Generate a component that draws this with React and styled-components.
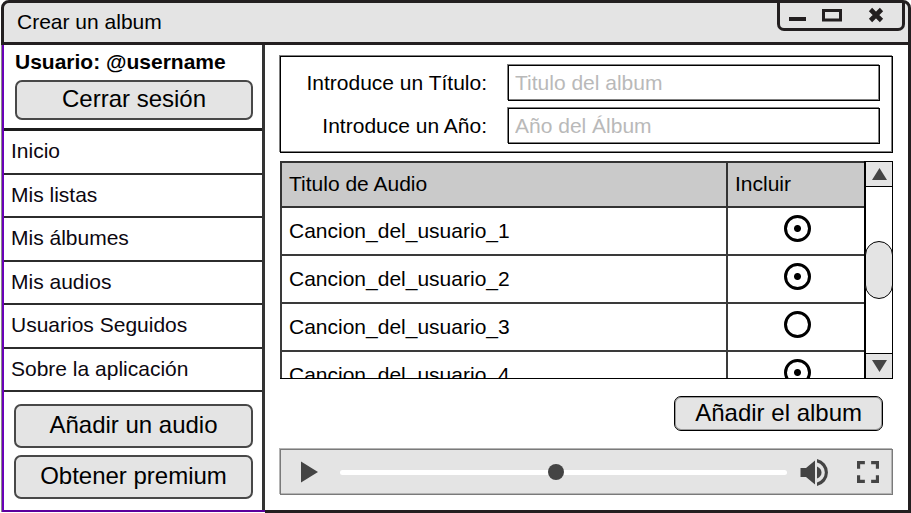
import React, { useState } from "react";
import styled, { createGlobalStyle, css } from "styled-components";

const INK = "#231f20";
const PANEL = "#e4e4e4";
const ICON = "#444444";

const GlobalStyle = createGlobalStyle`
  *, *::before, *::after { box-sizing: border-box; }
  body {
    margin: 0;
    background: #fff;
    color: #000;
    font-family: "Liberation Sans", Arial, sans-serif;
    font-size: 21px;
    line-height: 24px;
  }
  button, input { font: inherit; color: inherit; margin: 0; }
`;

const hairline = (line = "#000", soft = "#808080") => css`
  border: 1px solid ${line};
  box-shadow: -1px -1px 0 ${soft}, inset -1px -1px 0 ${soft};
`;

const Window = styled.div`
  display: flex;
  flex-direction: column;
  min-height: 100vh;
  padding-left: 1px;
`;

const TitleBar = styled.header`
  display: flex;
  justify-content: space-between;
  align-items: flex-start;
  border: 3px solid ${INK};
  border-radius: 8px 8px 0 0;
  background: ${PANEL};
  padding: 0 3px 0 13px;
`;

const Title = styled.h1`
  margin: 0;
  padding: 7px 0 8px;
  font-size: 21px;
  font-weight: 400;
`;

const WindowControls = styled.div`
  display: flex;
  align-items: center;
  gap: 16px;
  height: 28px;
  padding: 0 18px 1px 9px;
  border: 3px solid ${INK};
  border-top: 0;
  border-radius: 0 0 7px 7px;
`;

const IconButton = styled.button`
  display: flex;
  padding: 0;
  border: 0;
  background: none;
  cursor: pointer;
  margin-left: ${(p) => p.$gap || 0}px;
  svg { display: block; }
`;

const Body = styled.div`
  flex: 1;
  display: grid;
  grid-template-columns: 264px 1fr;
`;

const Sidebar = styled.aside`
  display: flex;
  flex-direction: column;
  margin: 0 0 1px 1px;
  border-left: 2px solid #6a00b8;
  border-bottom: 2px solid #5c009c;
  box-shadow: -1px 0 0 #8a8a8a;
`;

const SidebarInner = styled.div`
  flex: 1;
  display: flex;
  flex-direction: column;
  border-right: 3px solid #333;
`;

const UserPanel = styled.section`
  display: flex;
  flex-direction: column;
  gap: 6px;
  padding: 5px 9px 8px 11px;
  border-bottom: 3px solid #1c1c1c;
`;

const UserName = styled.strong`
  font-weight: 700;
`;

const Button = styled.button`
  height: ${(p) => p.$height}px;
  padding: 0 20px 2px;
  border: ${(p) => (p.$soft ? "2px solid #484848" : "1px solid #000")};
  border-radius: 7px;
  background: ${PANEL};
  font-size: 24px;
  line-height: 28px;
  white-space: nowrap;
  cursor: pointer;
  ${(p) => !p.$soft && css`box-shadow: inset 0 0 0 1px #9a9a9a;`}
`;

const Nav = styled.nav`
  flex: 1;
  display: flex;
  flex-direction: column;
`;

const NavLink = styled.a`
  flex: 1;
  display: flex;
  align-items: center;
  padding: 0 0 1px 7px;
  border-bottom: 2px solid #2c2c2c;
  color: #0c0710;
  text-decoration: none;
`;

const SidebarActions = styled.section`
  display: flex;
  flex-direction: column;
  gap: 7px;
  padding: 12px 9px 11px 10px;
`;

const Main = styled.main`
  display: flex;
  flex-direction: column;
  padding: 11px 15px 15px;
  border: solid ${INK};
  border-width: 0 3px 3px 0;
`;

const AlbumForm = styled.form`
  display: grid;
  grid-template-columns: 206px 1fr;
  align-items: center;
  gap: 7px 21px;
  padding: 8px 12px 8px 0;
  ${hairline()}
`;

const FieldLabel = styled.label`
  text-align: right;
`;

const TextField = styled.input`
  width: 100%;
  height: 36px;
  padding: 0 6px 1px;
  background: #fff;
  border-radius: 0;
  ${hairline()}
  &::placeholder { color: #b9b9b9; opacity: 1; }
`;

const SongPane = styled.section`
  flex: 1 1 0;
  min-height: 200px;
  display: grid;
  grid-template-columns: 1fr 29px;
  margin-top: 8px;
  overflow: hidden;
  border-bottom: 1px solid #000;
`;

const SongScroller = styled.div`
  overflow: hidden;
  height: 0;
  min-height: 100%;
`;

const SongTable = styled.table`
  width: 100%;
  table-layout: fixed;
  border-collapse: separate;
  border-spacing: 0;
`;

const HeadCell = styled.th`
  width: ${(p) => p.$width || "auto"};
  height: 47px;
  padding: 0 7px 2px;
  border: solid #333;
  border-width: 2px 0 2px 2px;
  background: #cacaca;
  font-weight: 400;
  text-align: left;
`;

const Cell = styled.td`
  height: 48px;
  padding: ${(p) => (p.$center ? "0 0 6px 2px" : "0 7px")};
  border: solid #3a3a3a;
  border-width: 0 0 2px 2px;
  text-align: ${(p) => (p.$center ? "center" : "left")};
`;

const IncludeBox = styled.input`
  appearance: none;
  display: block;
  width: 27px;
  height: 27px;
  margin: 0 auto;
  border: 3px solid #000;
  border-radius: 50%;
  background: #fff;
  &:checked {
    background: radial-gradient(circle, #000 3px, #fff 4px);
  }
`;

const ScrollBar = styled.div`
  display: flex;
  flex-direction: column;
  border: solid #000;
  border-width: 1px 1px 0 2px;
`;

const ScrollButton = styled.button`
  display: flex;
  justify-content: center;
  align-items: center;
  height: 25px;
  padding: 0;
  border: solid #000;
  border-width: ${(p) => (p.$down ? "1px 0 0" : "0 0 1px")};
  background: ${PANEL};
`;

const ScrollTrack = styled.div`
  flex: 1;
  display: flex;
  flex-direction: column;
  justify-content: center;
`;

const ScrollThumb = styled.div`
  height: 58px;
  margin: 0 -1px;
  border: 1px solid #000;
  border-radius: 14px;
  background: ${PANEL};
`;

const SubmitRow = styled.div`
  display: flex;
  justify-content: flex-end;
  padding: 17px 10px 18px 0;
`;

const Player = styled.section`
  display: flex;
  align-items: center;
  height: 46px;
  padding: 0 13px 0 20px;
  background: ${PANEL};
  ${hairline("#7a7a7a", "#b4b4b4")}
`;

const Seek = styled.input`
  appearance: none;
  flex: 1;
  min-width: 0;
  height: 16px;
  margin: 0 13px 0 21px;
  background: none;
  &::-webkit-slider-runnable-track {
    height: 5px;
    border-radius: 3px;
    background: #fff;
  }
  &::-webkit-slider-thumb {
    appearance: none;
    width: 16px;
    height: 16px;
    margin-top: -6px;
    border-radius: 50%;
    background: ${ICON};
  }
`;

const LINKS = [
  "Inicio",
  "Mis listas",
  "Mis álbumes",
  "Mis audios",
  "Usuarios Seguidos",
  "Sobre la aplicación",
];

const SONGS = [
  { name: "Cancion_del_usuario_1", included: true },
  { name: "Cancion_del_usuario_2", included: true },
  { name: "Cancion_del_usuario_3", included: false },
  { name: "Cancion_del_usuario_4", included: true },
];

export default function App() {
  const [position, setPosition] = useState(483);

  return (
    <>
      <GlobalStyle />
      <Window>
        <TitleBar>
          <Title>Crear un album</Title>
          <WindowControls>
            <IconButton type="button" aria-label="Minimizar">
              <svg width="17" height="14" viewBox="0 0 17 14">
                <rect y="9" width="17" height="4" fill={INK} />
              </svg>
            </IconButton>
            <IconButton type="button" aria-label="Maximizar">
              <svg width="20" height="14" viewBox="0 0 20 14">
                <rect x="1.5" y="2.5" width="17" height="9.5" fill="none" stroke={INK} strokeWidth="3" />
              </svg>
            </IconButton>
            <IconButton type="button" aria-label="Cerrar" $gap={10}>
              <svg width="16" height="16" viewBox="0 0 16 16">
                <path d="M2.500 2.500L13.500 13.500M13.500 2.500L2.500 13.500" stroke={INK} strokeWidth="4.6" />
              </svg>
            </IconButton>
          </WindowControls>
        </TitleBar>

        <Body>
          <Sidebar>
            <SidebarInner>
              <UserPanel>
                <UserName>Usuario: @username</UserName>
                <Button type="button" $height={40} $soft>Cerrar sesión</Button>
              </UserPanel>
              <Nav>
                {LINKS.map((text) => (
                  <NavLink key={text} href="#">{text}</NavLink>
                ))}
              </Nav>
              <SidebarActions>
                <Button type="button" $height={44} $soft>Añadir un audio</Button>
                <Button type="button" $height={44} $soft>Obtener premium</Button>
              </SidebarActions>
            </SidebarInner>
          </Sidebar>

          <Main>
            <AlbumForm id="album">
              <FieldLabel htmlFor="title">Introduce un Título:</FieldLabel>
              <TextField id="title" placeholder="Titulo del album" />
              <FieldLabel htmlFor="year">Introduce un Año:</FieldLabel>
              <TextField id="year" placeholder="Año del Álbum" />
            </AlbumForm>

            <SongPane>
              <SongScroller>
                <SongTable>
                  <thead>
                    <tr>
                      <HeadCell scope="col">Titulo de Audio</HeadCell>
                      <HeadCell scope="col" $width="138px">Incluir</HeadCell>
                    </tr>
                  </thead>
                  <tbody>
                    {SONGS.map((song) => (
                      <tr key={song.name}>
                        <Cell>{song.name}</Cell>
                        <Cell $center>
                          <IncludeBox
                            type="checkbox"
                            defaultChecked={song.included}
                            aria-label={`Incluir ${song.name}`}
                          />
                        </Cell>
                      </tr>
                    ))}
                  </tbody>
                </SongTable>
              </SongScroller>
              <ScrollBar>
                <ScrollButton type="button" aria-label="Subir">
                  <svg width="15" height="12" viewBox="0 0 15 12">
                    <path d="M7.5 0L15 12H0z" fill={ICON} />
                  </svg>
                </ScrollButton>
                <ScrollTrack>
                  <ScrollThumb />
                </ScrollTrack>
                <ScrollButton type="button" aria-label="Bajar" $down>
                  <svg width="15" height="12" viewBox="0 0 15 12">
                    <path d="M0 0H15L7.5 12z" fill={ICON} />
                  </svg>
                </ScrollButton>
              </ScrollBar>
            </SongPane>

            <SubmitRow>
              <Button type="submit" form="album" $height={35}>Añadir el album</Button>
            </SubmitRow>

            <Player>
              <IconButton type="button" aria-label="Reproducir">
                <svg width="18" height="22" viewBox="0 0 18 22">
                  <path d="M0 0.5L17 11L0 21.5z" fill={ICON} />
                </svg>
              </IconButton>
              <Seek
                type="range"
                min="0"
                max="1000"
                value={position}
                onChange={(e) => setPosition(Number(e.target.value))}
                aria-label="Posición"
              />
              <IconButton type="button" aria-label="Volumen">
                <svg width="28" height="27" viewBox="0 0 28 27" fill={ICON}>
                  <path d="M0.5 9H6L15 1.5V25.5L6 18H0.5z" />
                  <path d="M17 7.500Q21.500 9.500 21.500 13.500T17 19.500z" />
                  <path d="M17 0A13.800 13.800 0 0 1 17 27V23.500A10.300 10.300 0 0 0 17 3.500z" />
                </svg>
              </IconButton>
              <IconButton type="button" aria-label="Pantalla completa" $gap={29}>
                <svg width="22" height="22" viewBox="5 5 14 14" fill={ICON}>
                  <path d="M7 14H5v5h5v-2H7v-3zm-2-4h2V7h3V5H5v5zm12 7h-3v2h5v-5h-2v3zM14 5v2h3v3h2V5h-5z" />
                </svg>
              </IconButton>
            </Player>
          </Main>
        </Body>
      </Window>
    </>
  );
}
